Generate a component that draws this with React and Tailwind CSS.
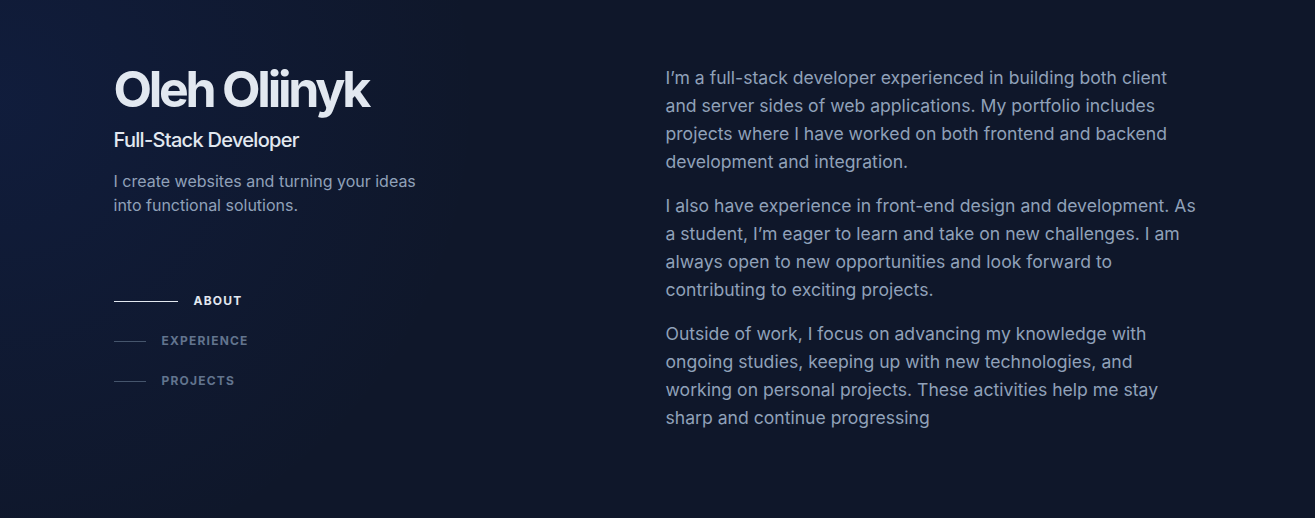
const navItems = [
  { label: 'About', active: true },
  { label: 'Experience', active: false },
  { label: 'Projects', active: false },
]

const paragraphs = [
  'I’m a full-stack developer experienced in building both client and server sides of web applications. My portfolio includes projects where I have worked on both frontend and backend development and integration.',
  'I also have experience in front-end design and development. As a student, I’m eager to learn and take on new challenges. I am always open to new opportunities and look forward to contributing to exciting projects.',
  'Outside of work, I focus on advancing my knowledge with ongoing studies, keeping up with new technologies, and working on personal projects. These activities help me stay sharp and continue progressing',
]

export default function App() {
  return (
    <div className="relative min-h-screen bg-[#0f172a] font-['Inter',sans-serif] text-slate-400 antialiased">
      <div className="pointer-events-none absolute inset-0 bg-[radial-gradient(600px_at_0px_100px,rgba(29,78,216,0.1),transparent_80%)]" />

      <div className="relative mx-auto min-h-screen max-w-[1280px] px-24">
        <div className="flex justify-between gap-4">
          <header className="w-1/2 pt-[64px]">
            <h1 className="text-[50px] leading-none font-bold tracking-[-0.065em] text-slate-200">Oleh Oliinyk</h1>
            <h2 className="mt-3 text-xl font-medium tracking-[-0.035em] text-slate-200">Full-Stack Developer</h2>
            <p className="mt-[15px] max-w-xs leading-normal">
              I create websites and turning your ideas into functional solutions.
            </p>

            <nav className="mt-16 w-max">
              <ul>
                {navItems.map((item) => (
                  <li key={item.label}>
                    <a href="#" className="flex items-center py-3">
                      <span
                        className={`mr-4 h-px ${item.active ? 'w-16 bg-slate-200' : 'w-8 bg-slate-600'}`}
                      />
                      <span
                        className={`text-xs font-bold uppercase tracking-widest ${
                          item.active ? 'text-slate-200' : 'text-slate-500'
                        }`}
                      >
                        {item.label}
                      </span>
                    </a>
                  </li>
                ))}
              </ul>
            </nav>
          </header>

          <main className="w-1/2 pt-[64px]">
            <section>
              {paragraphs.map((text) => (
                <p key={text.slice(0, 12)} className="mb-4 max-w-[533px] text-[17.6px] leading-7">
                  {text}
                </p>
              ))}
            </section>
          </main>
        </div>
      </div>
    </div>
  )
}
